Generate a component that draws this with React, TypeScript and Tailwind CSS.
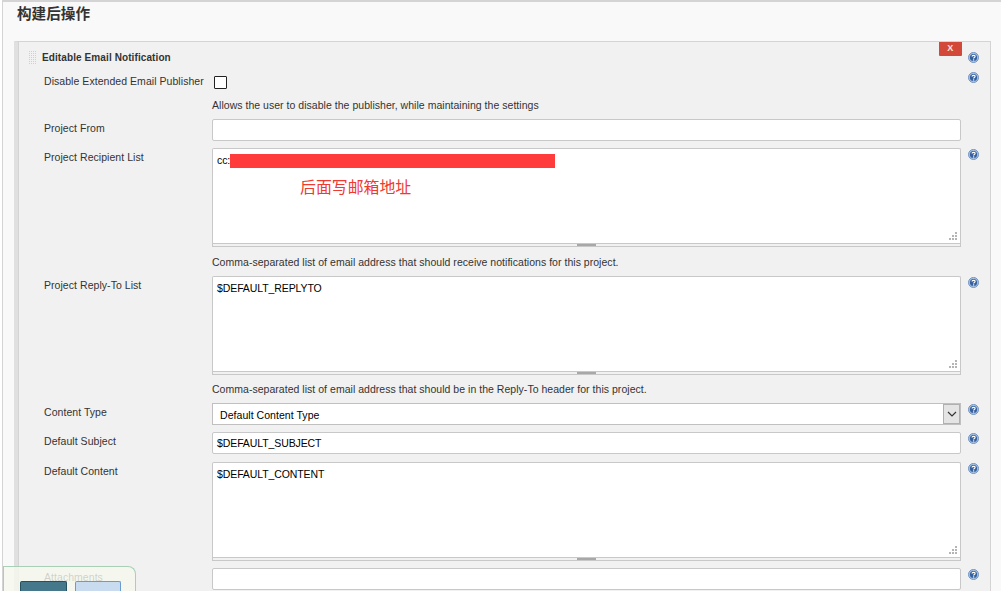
import type { ReactNode } from "react";

function HelpIcon() {
  return (
    <svg width="11" height="11" viewBox="0 0 12 12" className="block">
      <circle cx="6" cy="6" r="5.5" fill="#a9c0de" stroke="#6f91bf" strokeWidth="1" />
      <circle cx="6" cy="6" r="3.9" fill="#34619e" />
      <path d="M4.4 4.9 C4.4 3.2 7.7 3.2 7.7 4.9 C7.7 6 6.1 5.9 6.1 7.1" fill="none" stroke="#fff" strokeWidth="1.3" />
      <rect x="5.4" y="8" width="1.4" height="1.3" fill="#fff" />
    </svg>
  );
}

function Grip() {
  return (
    <svg width="10" height="10" viewBox="0 0 10 10" className="absolute right-[2px] bottom-[2px]">
      <g fill="#b5b5b5">
        <rect x="7" y="1" width="2" height="2" />
        <rect x="4" y="4" width="2" height="2" />
        <rect x="7" y="4" width="2" height="2" />
        <rect x="1" y="7" width="2" height="2" />
        <rect x="4" y="7" width="2" height="2" />
        <rect x="7" y="7" width="2" height="2" />
      </g>
    </svg>
  );
}

function DragHandle() {
  return (
    <svg width="8" height="13" viewBox="0 0 8 13" className="mr-[5px] shrink-0">
      <g stroke="#d0d0d0" strokeWidth="1" strokeDasharray="1 1">
        <path d="M0.5 0 V13" />
        <path d="M2.5 0 V13" />
        <path d="M4.5 0 V13" />
        <path d="M6.5 0 V13" />
      </g>
    </svg>
  );
}

function Row({
  label,
  help = true,
  helpClass = "pt-[1px]",
  className = "",
  children,
}: {
  label: string;
  help?: boolean;
  helpClass?: string;
  className?: string;
  children: ReactNode;
}) {
  return (
    <div className={`flex ${className}`}>
      <div className="w-[168px] shrink-0 pt-[2px] text-[#333]">{label}</div>
      <div className="w-[749px] shrink-0">{children}</div>
      <div className={`pl-[7px] ${helpClass}`}>{help && <HelpIcon />}</div>
    </div>
  );
}

function TextBox({ value }: { value?: string }) {
  return (
    <div className="h-[22px] w-full rounded-[2px] border border-[#c8c8c8] bg-white pl-[4px] leading-[20px] tracking-[-0.1px] text-black">
      {value}
    </div>
  );
}

function TextArea({ value, children }: { value?: string; children?: ReactNode }) {
  return (
    <div>
      <div className="relative h-[95px] w-full rounded-t-[2px] border border-b-0 border-[#c8c8c8] bg-white pl-[4px] pt-[5px] leading-[13px] tracking-[-0.1px] text-black">
        {value}
        {children}
        <Grip />
      </div>
      <div className="flex h-[4px] justify-center border-x border-y border-[#c8c8c8] bg-[#f1f1f1]">
        <div className="h-[2px] w-[19px] bg-[#a8a8a8]" />
      </div>
    </div>
  );
}

function Description({ text, className = "" }: { text: string; className?: string }) {
  return <div className={`pl-[168px] leading-[13px] tracking-[0.03px] text-[#333] ${className}`}>{text}</div>;
}

export default function App() {
  return (
    <div className="relative h-[591px] w-[1001px] overflow-hidden bg-white font-['Liberation_Sans','Noto_Sans_CJK_SC',sans-serif] text-[10.5px] tracking-[0.05px]">
      <div className="ml-[2px] h-[591px] border-l border-t-2 border-[#d4d4d4] bg-[#f9f9f9] pl-[14px] pt-[3px]">
        <h2 className="h-[36px] text-[14.6px] leading-[18px] font-bold tracking-normal text-[#333]">构建后操作</h2>

        <div className="ml-[-3px] h-[560px] w-[977px] border-r border-t border-[#d4d4d4] border-l-[4px] border-l-[#e0e0e0] bg-[#f1f1f1]">
          <div className="h-full border-l border-[#d4d4d4] pl-[25px] pr-0">
            <div className="ml-[-15px] flex h-[30px] items-center pt-[1px]">
              <DragHandle />
              <span className="text-[10px] font-bold tracking-[0.1px] text-[#333]">Editable Email Notification</span>
              <div className="ml-[768px] -mt-[1px] flex self-start">
                <div className="flex h-[14px] w-[23px] items-center justify-center rounded-b-[1px] bg-[#d24939] text-[9px] font-bold text-[#f8e6d8]">
                  X
                </div>
                <div className="ml-[6px] mt-[10px]">
                  <HelpIcon />
                </div>
              </div>
            </div>

            <div className="mt-[2px] flex h-[25px]">
              <div className="w-[168px] shrink-0 text-[#333]">Disable Extended Email Publisher</div>
              <div className="w-[749px] shrink-0">
                <div className="ml-[2px] mt-[2px] h-[13px] w-[13px] rounded-[1px] border border-[#222] bg-white" />
              </div>
              <div className="pl-[7px] -mt-[2px]">
                <HelpIcon />
              </div>
            </div>
            <Description text="Allows the user to disable the publisher, while maintaining the settings" />

            <Row label="Project From" help={false} className="mt-[7px]">
              <TextBox />
            </Row>

            <Row label="Project Recipient List" className="mt-[7px]">
              <TextArea value="cc:">
                <div className="absolute left-[17px] top-[5px] h-[14px] w-[325px] bg-[#ff3b3b]" />
                <div className="absolute left-[87px] top-[29px] text-[15.9px] leading-[20px] tracking-normal text-[#f0392f]">
                  后面写邮箱地址
                </div>
              </TextArea>
            </Row>
            <Description text="Comma-separated list of email address that should receive notifications for this project." className="mt-[9px]" />

            <Row label="Project Reply-To List" className="mt-[7px]">
              <TextArea value="$DEFAULT_REPLYTO" />
            </Row>
            <Description text="Comma-separated list of email address that should be in the Reply-To header for this project." className="mt-[8px]" />

            <Row label="Content Type" className="mt-[7px]">
              <div className="flex h-[22px] w-full border border-[#c0c0c0] bg-white">
                <div className="flex-1 pl-[7px] leading-[22px] text-black">Default Content Type</div>
                <div className="flex w-[17px] items-center justify-center border border-[#b0b0b0] bg-[#e4e4e4]">
                  <svg width="10" height="6" viewBox="0 0 10 6">
                    <path d="M1 1 L5 5 L9 1" fill="none" stroke="#333" strokeWidth="1.2" />
                  </svg>
                </div>
              </div>
            </Row>

            <Row label="Default Subject" className="mt-[7px]">
              <TextBox value="$DEFAULT_SUBJECT" />
            </Row>

            <Row label="Default Content" className="mt-[8px]">
              <TextArea value="$DEFAULT_CONTENT" />
            </Row>

            <Row label="Attachments" className="mt-[7px]">
              <TextBox />
            </Row>
          </div>
        </div>
      </div>

      <div className="absolute bottom-0 left-[3px] flex h-[25px] w-[133px] gap-[8px] rounded-tr-[8px] border border-b-0 border-[#a9d0b6] bg-[#f6f9ef]/80 pl-[16px] pt-[14px]">
        <div className="h-[12px] w-[47px] rounded-t-[2px] border border-b-0 border-[#24505f] bg-[#44788a]" />
        <div className="h-[12px] w-[46px] rounded-t-[2px] border border-b-0 border-[#6a9bd0] bg-[#c9dcef]" />
      </div>
    </div>
  );
}
